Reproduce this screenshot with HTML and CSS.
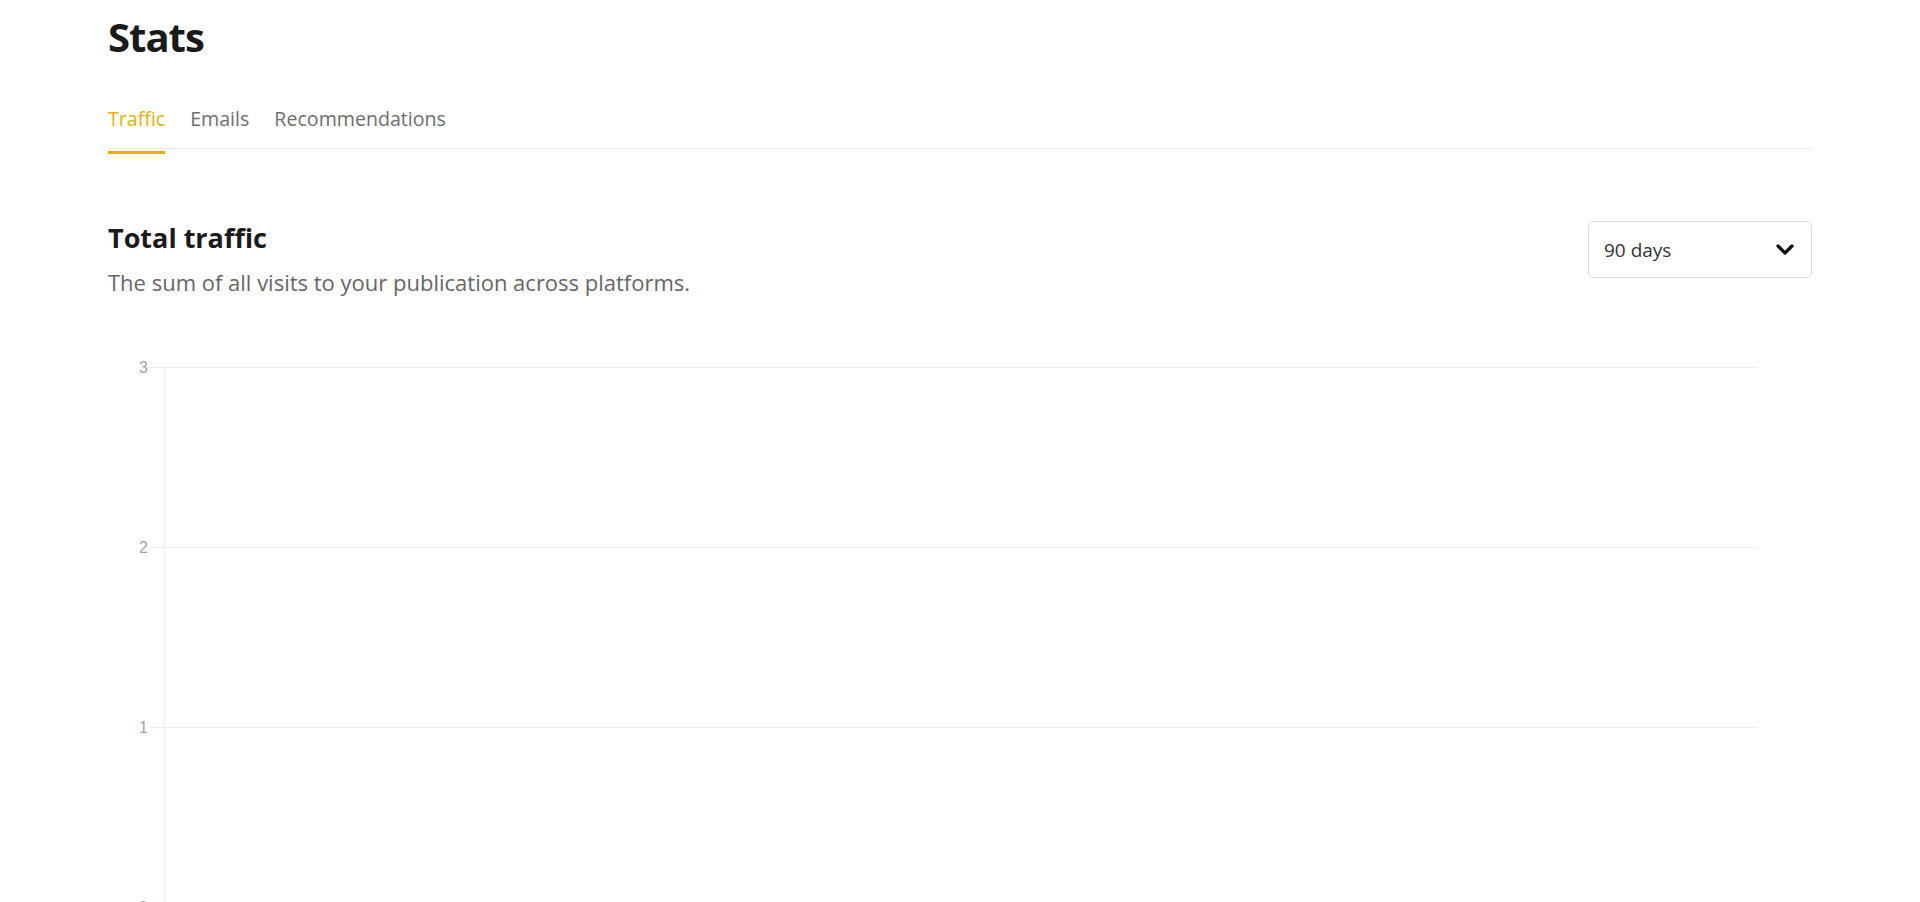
FILE: index.html
```html
<!DOCTYPE html>
<html lang="en">
<head>
<meta charset="utf-8">
<title>Stats</title>
<link rel="stylesheet" href="styles.css">
</head>
<body>
<div class="page">
  <main class="container">
    <h1 class="title">Stats</h1>
    <nav class="tabs">
      <a class="tab tab-active">Traffic</a>
      <a class="tab">Emails</a>
      <a class="tab">Recommendations</a>
    </nav>
    <section class="panel">
      <div class="panel-head">
        <div class="panel-text">
          <h2 class="panel-title">Total traffic</h2>
          <p class="panel-desc">The sum of all visits to your publication across platforms.</p>
        </div>
        <div class="select">
          <span class="select-value">90 days</span>
          <svg class="chevron" width="18" height="11" viewBox="0 0 18 11"><path d="M2 2 L9 9 L16 2" fill="none" stroke="#111" stroke-width="3.2" stroke-linecap="round" stroke-linejoin="round"/></svg>
        </div>
      </div>
      <div class="chart">
        <svg class="chart-svg" width="1704" height="600" viewBox="0 0 1704 600">
          <g class="grid">
            <line x1="41" y1="12.5" x2="1649" y2="12.5"/>
            <line x1="41" y1="192.5" x2="1649" y2="192.5"/>
            <line x1="41" y1="372.5" x2="1649" y2="372.5"/>
            <line x1="41" y1="552.5" x2="1649" y2="552.5"/>
            <line x1="56.5" y1="12" x2="56.5" y2="560"/>
          </g>
          <g class="labels">
            <text x="40" y="18">3</text>
            <text x="40" y="198">2</text>
            <text x="40" y="378">1</text>
            <text x="40" y="558">0</text>
          </g>
        </svg>
      </div>
    </section>
  </main>
</div>
</body>
</html>
```

FILE: styles.css
```css
html, body {
  margin: 0;
  padding: 0;
  background: #fff;
}
body {
  font-family: "Open Sans", "Noto Sans", sans-serif;
  color: #1a1a1a;
  overflow: hidden;
}
.page {
  height: 902px;
  overflow: hidden;
}
.container {
  max-width: 1704px;
  margin: 0 auto;
}
.title {
  margin: 13px 0 0;
  font-size: 40px;
  line-height: 48px;
  font-weight: 700;
  color: #1a1a1a;
  letter-spacing: -1px;
}
.tabs {
  display: flex;
  gap: 25px;
  margin-top: 46px;
  border-bottom: 1px solid #ececec;
}
.tab {
  position: relative;
  font-size: 19.6px;
  line-height: 24px;
  padding-bottom: 17px;
  color: #6e6e6e;
  cursor: pointer;
}
.tab-active {
  color: #e8b100;
}
.tab-active::after {
  content: "";
  position: absolute;
  left: 0;
  right: 0;
  bottom: -6px;
  height: 3px;
  background: #e8b100;
}
.panel {
  margin-top: 72px;
}
.panel-head {
  display: flex;
  justify-content: space-between;
  align-items: flex-start;
}
.panel-title {
  margin: 0;
  font-size: 27px;
  line-height: 34px;
  font-weight: 700;
  color: #1a1a1a;
}
.panel-desc {
  margin: 13px 0 0;
  font-size: 22px;
  line-height: 28px;
  color: #666;
}
.select {
  box-sizing: border-box;
  width: 224px;
  height: 57px;
  margin-top: 0;
  border: 1px solid #dcdcdc;
  border-radius: 5px;
  display: flex;
  align-items: center;
  justify-content: space-between;
  padding: 0 17px 0 15px;
}
.select-value {
  font-size: 19px;
  color: #333;
}
.chart {
  margin-top: 59px;
}
.chart-svg {
  display: block;
}
.grid line {
  stroke: #efefef;
  stroke-width: 1;
}
.labels text {
  font-family: "Liberation Sans", Arial, sans-serif;
  font-size: 16px;
  fill: #a3a3a3;
  text-anchor: end;
}
```
